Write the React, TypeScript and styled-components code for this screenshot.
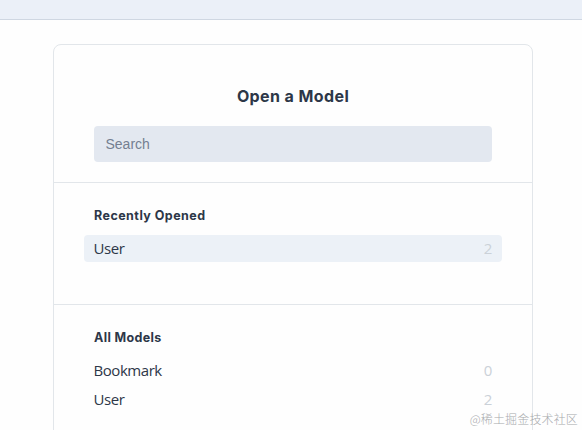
import React from 'react';
import styled, { createGlobalStyle } from 'styled-components';

const GlobalStyle = createGlobalStyle`
  * { box-sizing: border-box; }
  body {
    margin: 0;
    background: #fefefe;
    color: #2d3748;
    font-family: "Open Sans", "Noto Sans", sans-serif;
    overflow: hidden;
  }
`;

const Page = styled.div`
  position: relative;
  display: flex;
  flex-direction: column;
  align-items: center;
  width: 582px;
  height: 430px;
  overflow: hidden;
`;

const TopBar = styled.header`
  flex: none;
  align-self: stretch;
  height: 20px;
  margin-bottom: 24px;
  background: #ebf0f8;
  border-bottom: 1px solid #cfd7e2;
`;

const Card = styled.main`
  flex: none;
  width: 480px;
  height: 440px;
  margin-left: 4px;
  border: 1px solid #e2e6ea;
  border-radius: 8px;
`;

const SearchSection = styled.section`
  height: 138px;
  padding: 38px 40px 0;
  border-bottom: 1px solid #e2e6ea;
`;

const Title = styled.h1`
  display: flex;
  justify-content: center;
  margin: 0 0 16px;
  font: 700 16px/27px Inter, sans-serif;
  letter-spacing: 0.4px;
  white-space: nowrap;
`;

const SearchInput = styled.input`
  display: block;
  width: 398px;
  height: 36px;
  padding: 0 11.5px;
  border: 0;
  border-radius: 4px;
  outline: 0;
  background: #e3e8f0;
  color: #2d3748;
  font: 14px "Liberation Sans", sans-serif;
  &::placeholder { color: #747f91; opacity: 1; }
`;

const ModelSection = styled.section<{ $divided?: boolean }>`
  height: 122px;
  padding: 23px 30px 0;
  border-bottom: ${({ $divided }) => ($divided ? '1px solid #e2e6ea' : '0')};
`;

const SectionTitle = styled.h2<{ $spacing: string }>`
  margin: 0 0 9px 10px;
  font: 700 12.5px/20px Inter, sans-serif;
  letter-spacing: ${({ $spacing }) => $spacing};
  white-space: nowrap;
`;

const ModelList = styled.div`
  display: flex;
  flex-direction: column;
  gap: 2px;
`;

const ModelRow = styled.div<{ $active?: boolean }>`
  display: flex;
  align-items: center;
  justify-content: space-between;
  height: 27px;
  padding: 0 10px 0 9.5px;
  border-radius: 4px;
  background: ${({ $active }) => ($active ? '#ecf1f7' : 'transparent')};
  font-size: 15px;
  line-height: 27px;
  letter-spacing: -0.45px;
`;

const Count = styled.span`
  color: #cbd1d8;
`;

const Watermark = styled.div`
  position: absolute;
  right: 4px;
  bottom: 2px;
  color: #a8aaad;
  font: 300 12px/18px "Noto Sans CJK SC", sans-serif;
  letter-spacing: 0.15px;
  white-space: nowrap;
`;

type Model = { name: string; count: number; active?: boolean };

const recent: Model[] = [{ name: 'User', count: 2, active: true }];
const all: Model[] = [
  { name: 'Bookmark', count: 0 },
  { name: 'User', count: 2 },
];

const Models = ({ items }: { items: Model[] }) => (
  <ModelList>
    {items.map((item) => (
      <ModelRow key={item.name} $active={item.active}>
        <span>{item.name}</span>
        <Count>{item.count}</Count>
      </ModelRow>
    ))}
  </ModelList>
);

export default function App() {
  return (
    <>
      <GlobalStyle />
      <Page>
        <TopBar />
        <Card>
          <SearchSection>
            <Title>Open a Model</Title>
            <SearchInput placeholder="Search" />
          </SearchSection>
          <ModelSection $divided>
            <SectionTitle $spacing="0.45px">Recently Opened</SectionTitle>
            <Models items={recent} />
          </ModelSection>
          <ModelSection>
            <SectionTitle $spacing="0.35px">All Models</SectionTitle>
            <Models items={all} />
          </ModelSection>
        </Card>
        <Watermark>@稀土掘金技术社区</Watermark>
      </Page>
    </>
  );
}
